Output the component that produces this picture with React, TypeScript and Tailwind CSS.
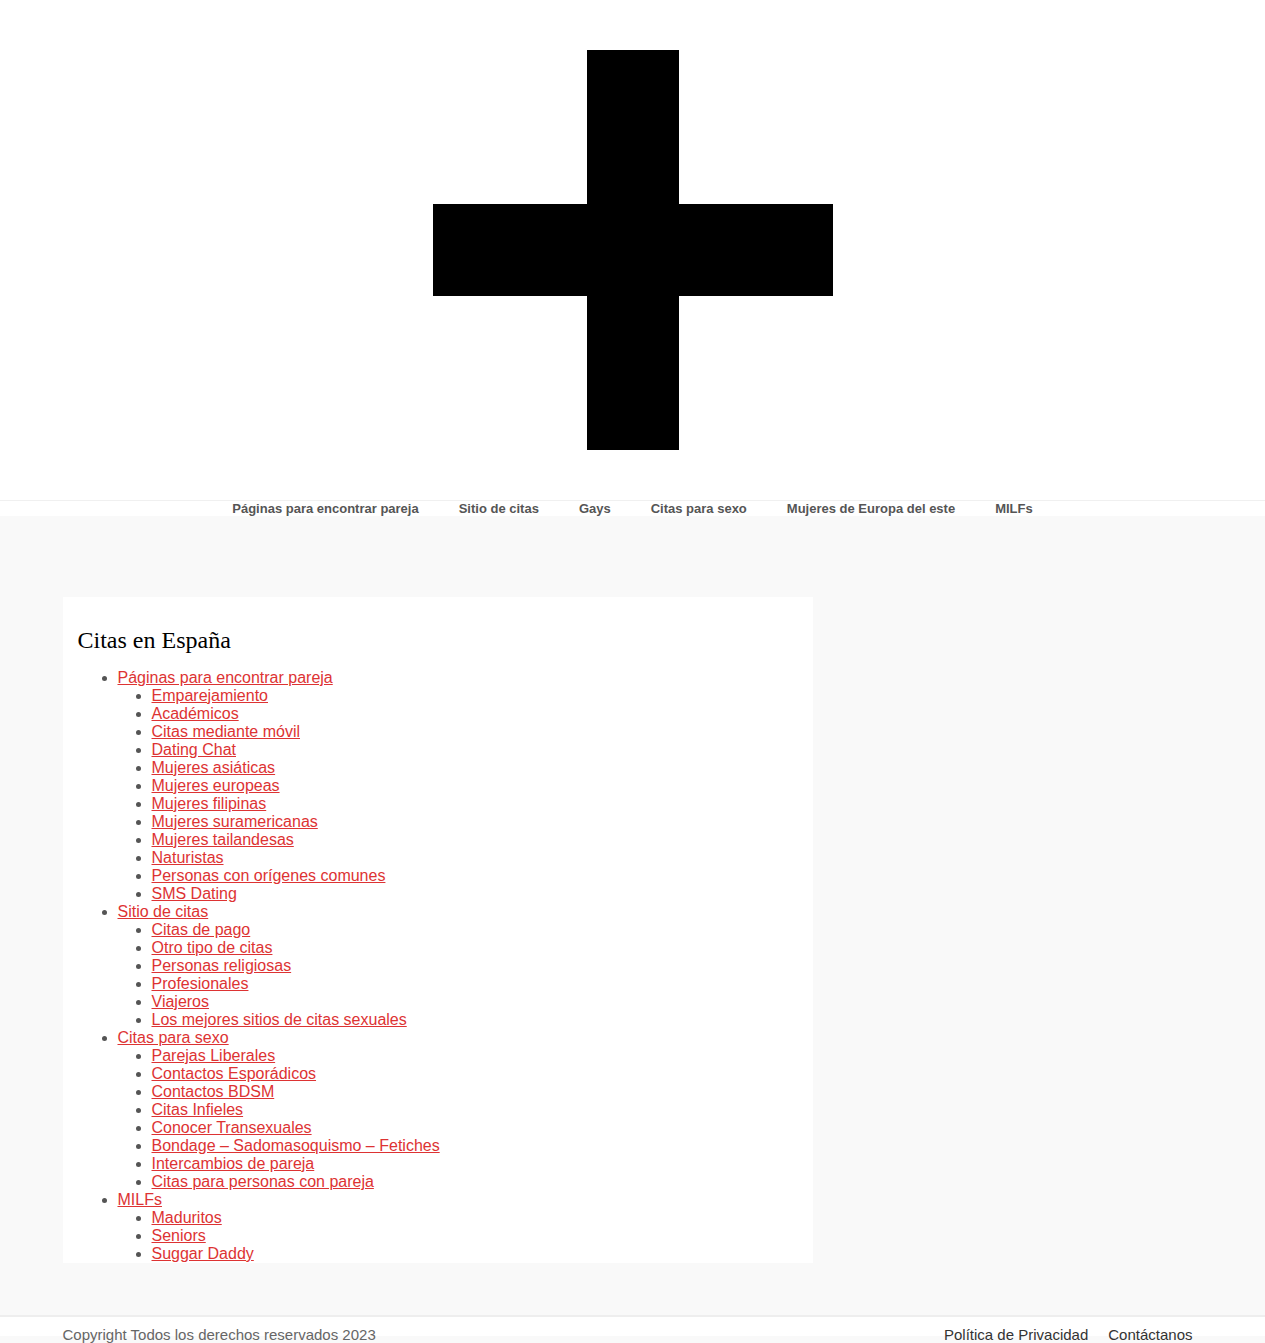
import React from "react";

const groups: { title: string; items: string[] }[] = [
  {
    title: "Páginas para encontrar pareja",
    items: [
      "Emparejamiento",
      "Académicos",
      "Citas mediante móvil",
      "Dating Chat",
      "Mujeres asiáticas",
      "Mujeres europeas",
      "Mujeres filipinas",
      "Mujeres suramericanas",
      "Mujeres tailandesas",
      "Naturistas",
      "Personas con orígenes comunes",
      "SMS Dating",
    ],
  },
  {
    title: "Sitio de citas",
    items: [
      "Citas de pago",
      "Otro tipo de citas",
      "Personas religiosas",
      "Profesionales",
      "Viajeros",
      "Los mejores sitios de citas sexuales",
    ],
  },
  {
    title: "Citas para sexo",
    items: [
      "Parejas Liberales",
      "Contactos Esporádicos",
      "Contactos BDSM",
      "Citas Infieles",
      "Conocer Transexuales",
      "Bondage – Sadomasoquismo – Fetiches",
      "Intercambios de pareja",
      "Citas para personas con pareja",
    ],
  },
  {
    title: "MILFs",
    items: ["Maduritos", "Seniors", "Suggar Daddy"],
  },
];

const nav = [
  "Páginas para encontrar pareja",
  "Sitio de citas",
  "Gays",
  "Citas para sexo",
  "Mujeres de Europa del este",
  "MILFs",
];

export default function App() {
  return (
    <div className="min-h-[1343px] bg-[#f9f9f9] font-['Liberation_Sans',Arial,sans-serif]">
      <header className="bg-white py-[50px] flex justify-center">
        <svg width="400" height="400" viewBox="0 0 400 400">
          <rect x="154" y="0" width="92" height="400" fill="#000" />
          <rect x="0" y="154" width="400" height="92" fill="#000" />
        </svg>
      </header>
      <nav className="bg-white border-t border-[#f0f0f0] h-[16px] flex justify-center">
        <ul className="flex">
          {nav.map((n) => (
            <li
              key={n}
              className="px-[20px] text-[13px] leading-[16px] font-bold text-[#555]"
            >
              {n}
            </li>
          ))}
        </ul>
      </nav>
      <main className="max-w-[1140px] mx-auto pt-[81px] pb-[52px]">
        <article className="w-[750px] bg-white px-[15px] pt-[29px]">
          <h2 className="font-['Liberation_Serif',serif] text-[24px] leading-[28px] text-black mb-[15px]">
            Citas en España
          </h2>
          <ul className="list-disc pl-[40px] text-[16px] leading-[18px] marker:text-[#555]">
            {groups.map((g) => (
              <li key={g.title}>
                <a className="text-[#dd3333] underline" href="#">
                  {g.title}
                </a>
                <ul className="list-disc pl-[34px]">
                  {g.items.map((i) => (
                    <li key={i}>
                      <a className="text-[#dd3333] underline" href="#">
                        {i}
                      </a>
                    </li>
                  ))}
                </ul>
              </li>
            ))}
          </ul>
        </article>
      </main>
      <footer className="border-t-2 border-[#eeeeee]">
        <div className="bg-white h-[19px]" />
        <div className="bg-[#f9f9f9] h-[7px]">
          <div className="max-w-[1140px] mx-auto flex justify-between text-[15px] leading-[17px] -translate-y-[10px] pr-[10px]">
            <span className="text-[#666]">
              Copyright Todos los derechos reservados 2023
            </span>
            <span className="flex gap-[20px] text-[#333]">
              <span>Política de Privacidad</span>
              <span>Contáctanos</span>
            </span>
          </div>
        </div>
      </footer>
    </div>
  );
}
